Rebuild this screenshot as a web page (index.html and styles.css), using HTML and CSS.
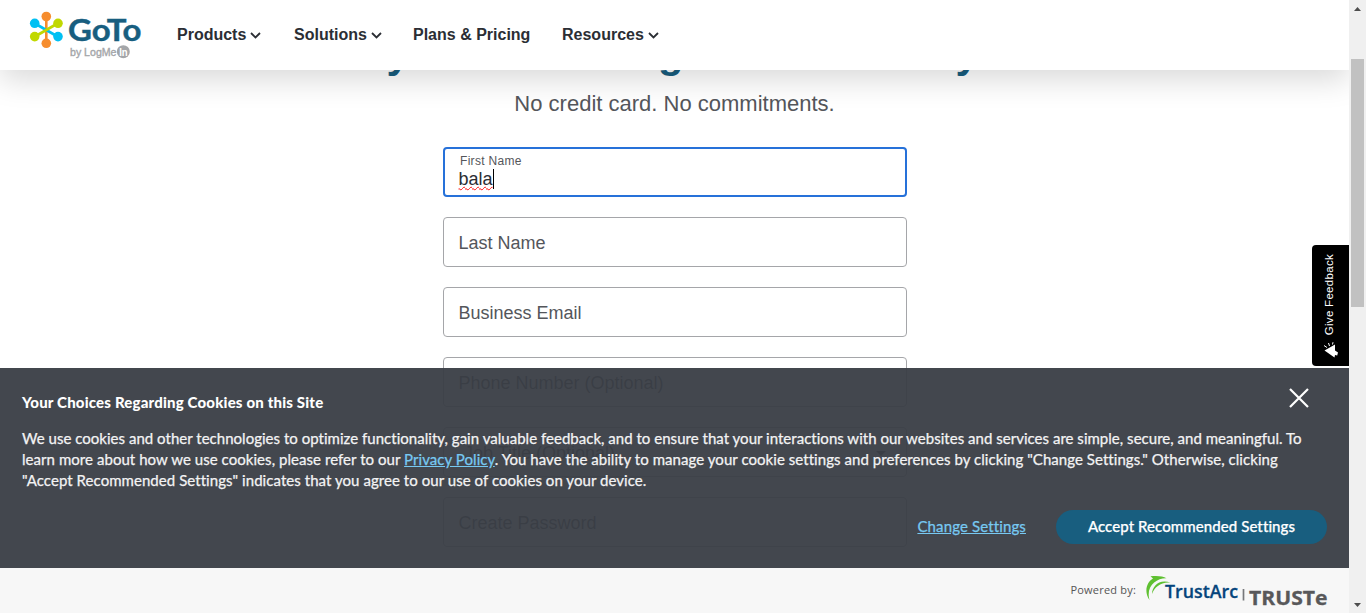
FILE: index.html
```html
<!DOCTYPE html>
<html lang="en">
<head>
<meta charset="utf-8">
<title>GoTo Trial</title>
<link rel="stylesheet" href="styles.css">
</head>
<body>
<div class="viewport">
  <div class="page">
    <main class="signup">
      <h1 class="headline">Try GoToMeeting free for 14 days</h1>
      <p class="subhead">No credit card. No commitments.</p>
      <form class="form">
        <div class="field focused"><label class="mini">First Name</label><span class="value"><span class="misspelt">bala</span><i class="caret"></i></span></div>
        <div class="field">Last Name</div>
        <div class="field">Business Email</div>
        <div class="field">Phone Number (Optional)</div>
        <div class="field select"><span>Job Title (Optional)</span><svg width="10" height="5" viewBox="0 0 10 5"><path d="M0 0h10L5 5z" fill="#555"/></svg></div>
        <div class="field">Create Password</div>
      </form>
    </main>

    <header class="header">
      <svg class="logo" width="116" height="50" viewBox="28 10 116 50">
        <g stroke-width="2.6" stroke-linecap="round">
          <path d="M46.300 17v26" stroke="#f68d2e"/>
          <path d="M35 23.500l22.500 13" stroke="#00c0f3"/>
          <path d="M35 36.500l22.500-13" stroke="#c1d800"/>
        </g>
        <g fill="#f68d2e"><circle cx="46.300" cy="16.500" r="4.800"/><circle cx="46.300" cy="43.300" r="4.800"/></g>
        <g fill="#00c0f3"><circle cx="34.700" cy="23.300" r="4.800"/><circle cx="58" cy="36.600" r="4.800"/></g>
        <g fill="#c1d800"><circle cx="34.700" cy="36.600" r="4.800"/><circle cx="58" cy="23.300" r="4.800"/></g>
        <text class="goto" x="68" y="41.300" textLength="73.500" lengthAdjust="spacingAndGlyphs">GoTo</text>
        <text class="byline" x="70" y="55.500" textLength="46.500" lengthAdjust="spacingAndGlyphs">by LogMe</text>
        <circle cx="123.300" cy="51.700" r="6.500" fill="#a4a6a9"/>
        <text class="in" x="119.200" y="55.600" textLength="8.500" lengthAdjust="spacingAndGlyphs">In</text>
      </svg>
      <nav class="nav">
        <a class="item products">Products<svg width="11" height="7" viewBox="0 0 11 7"><path d="M1 1l4.500 4.500L10 1"/></svg></a>
        <a class="item solutions">Solutions<svg width="11" height="7" viewBox="0 0 11 7"><path d="M1 1l4.500 4.500L10 1"/></svg></a>
        <a class="item plans">Plans &amp; Pricing</a>
        <a class="item">Resources<svg width="11" height="7" viewBox="0 0 11 7"><path d="M1 1l4.500 4.500L10 1"/></svg></a>
      </nav>
    </header>

    <div class="feedback">
      <svg width="18" height="18" viewBox="0 0 18 18"><path d="M2.500 9.500L13 3.500V9.500L16 11.500 15.200 14.500 13 14 12.500 16.500z" fill="#fff"/><path d="M2 4.500L5 6.500M6.500 2L7.500 5M11 1.200L10.500 3.500" stroke="#fff" fill="none"/></svg>
      <span>Give Feedback</span>
    </div>

    <section class="consent">
      <div class="banner">
        <div class="banner-head">
          <h2>Your Choices Regarding Cookies on this Site</h2>
          <svg class="close" width="20" height="20" viewBox="0 0 20 20"><path d="M1 1l18 18M19 1L1 19"/></svg>
        </div>
        <p class="copy">
          <span class="line l1">We use cookies and other technologies to optimize functionality, gain valuable feedback, and to ensure that your interactions with our websites and services are simple, secure, and meaningful. To</span>
          <span class="line l2">learn more about how we use cookies, please refer to our <a class="link">Privacy Policy</a>. You have the ability to manage your cookie settings and preferences by clicking "Change Settings." Otherwise, clicking</span>
          <span class="line l3">"Accept Recommended Settings" indicates that you agree to our use of cookies on your device.</span>
        </p>
        <div class="actions"><a class="link">Change Settings</a><button class="accept">Accept Recommended Settings</button></div>
      </div>
      <footer class="powered">
        <span class="by">Powered by:</span>
        <svg width="184" height="40" viewBox="1144 571 184 40">
          <path d="M1149.500 600C1143.500 591 1147 582 1153 578.500L1150.500 576.300C1157 575.500 1163 576 1166.500 578.300C1157 577.800 1145.500 586 1149.500 600z" fill="#5fc031"/>
          <path d="M1152 594C1152 586.500 1159 578.500 1170.500 582.500C1161 581.500 1154.500 587 1152 594z" fill="#5fc031"/>
          <text class="trustarc" x="1165" y="598" textLength="73" lengthAdjust="spacingAndGlyphs">TrustArc</text>
          <path d="M1243.500 589v11.500" stroke="#77787b" stroke-width="1.700"/>
          <text class="truste" x="1249" y="605" textLength="78.500" lengthAdjust="spacingAndGlyphs">TRUSTe</text>
        </svg>
      </footer>
    </section>
  </div>
  <aside class="scrollbar">
    <svg width="7" height="4" viewBox="0 0 7 4"><path d="M0 4L3.500 0 7 4z"/></svg>
    <div class="track"><div class="thumb"></div></div>
    <svg width="7" height="4" viewBox="0 0 7 4"><path d="M0 0L3.500 4 7 0z"/></svg>
  </aside>
</div>
</body>
</html>
```
FILE: styles.css
```css
* { box-sizing: border-box; }
body { margin: 0; font-family: "Liberation Sans", Arial, sans-serif; overflow: hidden; }
.viewport { display: flex; width: 1366px; height: 613px; overflow: hidden; background: #fff; }
.page { position: relative; width: 1349px; height: 613px; overflow: hidden; }

.signup { display: flex; flex-direction: column; align-items: center; padding-top: 29px; }
.headline { margin: 0; height: 52px; font-size: 41.5px; line-height: 50px; color: #185e7f; white-space: nowrap; }
.subhead { margin: 9px 0 0; height: 28px; line-height: 28px; font-size: 22px; color: #54565b; }
.form { display: flex; flex-direction: column; gap: 20px; width: 464px; margin: 29px 0 0 1px; }
.field { display: flex; align-items: center; height: 50px; padding: 2px 14.5px 0; border: 1px solid #a5a6a9; border-radius: 4px; font-size: 18px; color: #54565b; background: #fff; }
.focused { flex-direction: column; align-items: flex-start; padding: 5px 14px 0; border: 2px solid #2671d9; }
.mini { margin-left: 1px; font-size: 12px; line-height: 15px; letter-spacing: 0.3px; }
.value { display: flex; height: 21px; line-height: 20px; color: #2b2e34; margin-left: -0.5px; }
.misspelt { text-decoration: underline wavy #f11 1px; text-underline-offset: 1px; text-decoration-skip-ink: none; }
.caret { width: 1px; height: 20px; background: #000; }
.select { justify-content: space-between; padding-left: 20px; padding-right: 20px; }

.header { position: absolute; inset: 0 0 auto; display: flex; height: 70px; padding-left: 28px; background: #fff; box-shadow: 0 10px 30px rgba(0,0,0,.15); clip-path: inset(0 0 -50px 0); }
.logo { margin-top: 10px; }
.goto { font: 700 31px "Lato", sans-serif; fill: #185e7f; stroke: #185e7f; stroke-width: 0.4; }
.byline { font: 400 11.5px "Liberation Sans", Arial, sans-serif; fill: #a4a6a9; stroke: #a4a6a9; stroke-width: 0.4; }
.in { font: 700 10.5px "Liberation Sans", Arial, sans-serif; fill: #fff; }
.nav { display: flex; height: 70px; margin-left: 33px; align-items: center; font-size: 16px; font-weight: 700; color: #2b2e34; white-space: nowrap; }
.item { display: flex; align-items: center; gap: 4px; }
.item svg { margin-top: 1px; fill: none; stroke: #2b2e34; stroke-width: 1.8; }
.products { width: 117px; }
.solutions { width: 119px; }
.plans { width: 149px; }

.feedback { position: absolute; right: 0; top: 245px; display: flex; flex-direction: column-reverse; align-items: center; justify-content: space-between; width: 37px; height: 121px; padding: 9px 0 7px; border-radius: 4px 0 0 4px; background: #000; color: #fff; }
.feedback span { writing-mode: vertical-rl; transform: rotate(180deg); font-size: 11.5px; line-height: 14px; letter-spacing: 0.3px; margin-right: 3px; }

.consent { position: absolute; inset: 368px 0 0; font-family: Lato, sans-serif; font-variant-ligatures: none; }
.banner { height: 200px; padding: 20px 22px 0; background: rgba(57,61,68,.95); color: #f3f3f4; }
.banner-head { display: flex; justify-content: space-between; height: 40px; padding-right: 18px; }
.banner h2 { margin: 4px 0 0; font-size: 15px; line-height: 21px; font-weight: 900; color: #fff; letter-spacing: 0.18px; }
.close { fill: none; stroke: #fff; stroke-width: 2.2; }
.copy { margin: 0; font-size: 15px; line-height: 21px; -webkit-text-stroke: 0.25px; }
.line { display: block; white-space: nowrap; }
.l1 { letter-spacing: 0.025px; }
.l2 { letter-spacing: 0.053px; }
.l3 { letter-spacing: 0.055px; }
.link { color: #77c9f2; text-decoration: underline; }
.actions { display: flex; justify-content: flex-end; align-items: center; gap: 30px; margin-top: 19px; font-size: 15px; -webkit-text-stroke: 0.25px; }
.actions .link { margin-top: -2px; letter-spacing: 0.13px; }
.accept { width: 271px; height: 34px; padding: 0 0 2px; border: 0; border-radius: 17px; background: #185e7f; color: #fff; font: 500 15px Lato, sans-serif; letter-spacing: 0.08px; font-variant-ligatures: none; -webkit-text-stroke: 0.25px; }
.powered { display: flex; align-items: flex-start; justify-content: flex-end; height: 45px; padding: 3px 21px 0 0; gap: 8px; background: #f7f7f7; }
.by { margin-top: 11px; font: 11px/16px "Open Sans", sans-serif; color: #555; letter-spacing: 0.2px; }
.trustarc { font: 600 18px "Open Sans", sans-serif; fill: #05457c; stroke: #05457c; stroke-width: 0.3; }
.truste { font: 700 20px "Open Sans", sans-serif; fill: #58585a; stroke: #58585a; stroke-width: 0.3; }

.scrollbar { display: flex; flex-direction: column; align-items: center; width: 17px; padding: 7px 0 6px; background: #f0f0f0; }
.scrollbar svg { fill: #4d4d4d; }
.track { flex: 1; width: 13px; padding-top: 48px; }
.thumb { height: 248px; background: #c1c1c1; }
```
